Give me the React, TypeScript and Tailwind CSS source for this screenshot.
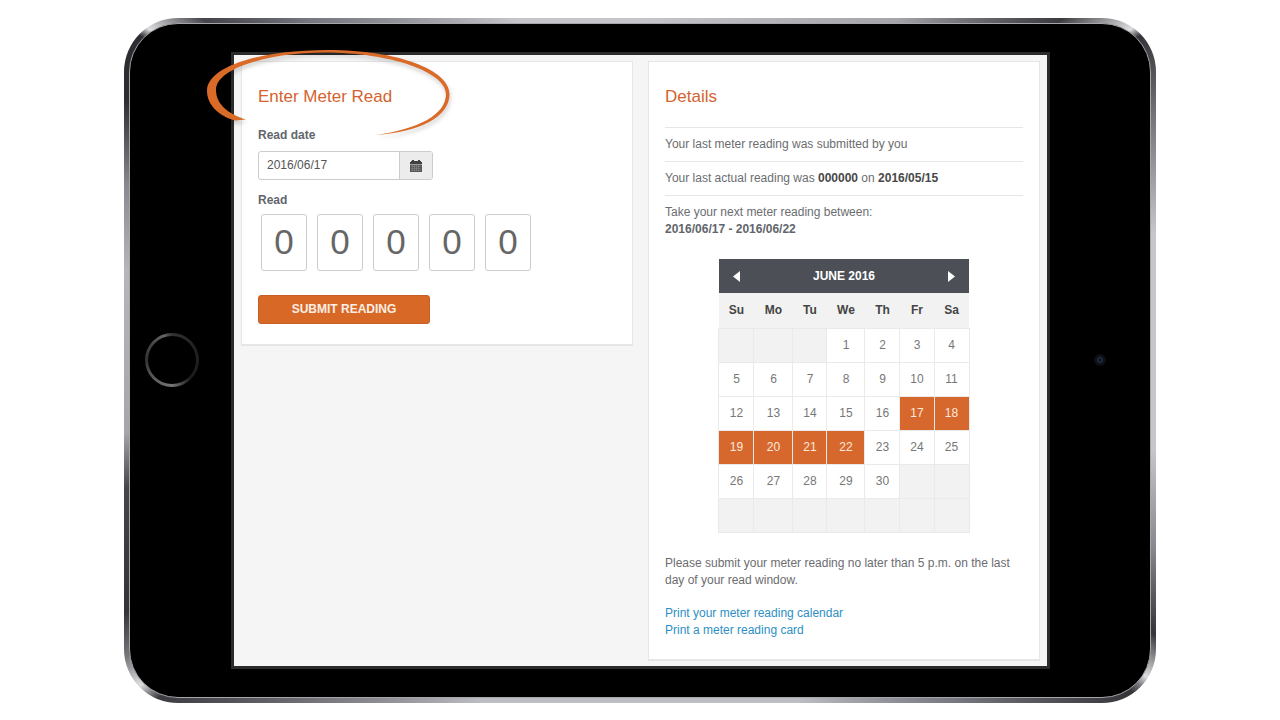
import type { ReactNode } from 'react';

const weekDays = ['Su', 'Mo', 'Tu', 'We', 'Th', 'Fr', 'Sa'];
const columnWidths = ['w-[35px]', 'w-[39px]', 'w-[34px]', 'w-[38px]', 'w-[35px]', 'w-[34px]', 'w-[35px]'];

const FIRST_WEEKDAY = 3;
const DAYS_IN_MONTH = 30;
const WINDOW_START = 17;
const WINDOW_END = 22;

const weeks = Array.from({ length: 6 }, (_, week) =>
  weekDays.map((_, weekday) => {
    const day = week * 7 + weekday - FIRST_WEEKDAY + 1;
    return day >= 1 && day <= DAYS_IN_MONTH ? day : null;
  }),
);

const dayClass = (day: number | null) => {
  if (day === null) return 'bg-[#f2f2f2]';
  if (day >= WINDOW_START && day <= WINDOW_END) return 'bg-[#d7682d] text-[#fbe9df]';
  return 'bg-white';
};

const CalendarIcon = () => (
  <svg width="12" height="12" viewBox="0 0 12 12" aria-hidden="true">
    <path d="M1 1h1V0h2v1h4V0h2v1h1v1h1v2H0V2h1z" fill="#404040" />
    <path d="M0 4.500h12V12H0z" fill="#555" />
    <path
      d="M1 6.500h10M1 8.500h10M1 10.500h10M2.500 5v6M4.500 5v6M6.500 5v6M8.500 5v6"
      stroke="#999"
      strokeWidth=".4"
    />
  </svg>
);

const Card = ({ title, children }: { title: string; children: ReactNode }) => (
  <section className="min-w-0 flex-1 border border-[#e6e6e6] border-b-2 bg-white px-4 pt-[23px]">
    <h2 className="text-[17px] leading-6 text-[#d4622f]">{title}</h2>
    {children}
  </section>
);

const MeterForm = () => (
  <form className="flex flex-col items-start pt-[14px] pb-5" onSubmit={(e) => e.preventDefault()}>
    <label htmlFor="read-date" className="leading-6 font-bold text-[#62666c]">
      Read date
    </label>
    <div className="mt-1 flex h-[29px] w-[175px] overflow-hidden rounded-[3px] border border-[#ccc]">
      <input
        id="read-date"
        defaultValue="2016/06/17"
        className="min-w-0 flex-1 px-2 text-[#555] outline-none"
      />
      <button
        type="button"
        aria-label="Open calendar"
        className="flex w-[33px] items-center justify-center border-l border-[#ccc] bg-[#ececec]"
      >
        <CalendarIcon />
      </button>
    </div>
    <fieldset className="mt-2">
      <legend className="leading-6 font-bold text-[#62666c]">Read</legend>
      <div className="mt-[2px] flex gap-[10px] px-[3px]">
        {[1, 2, 3, 4, 5].map((digit) => (
          <input
            key={digit}
            aria-label={`Digit ${digit}`}
            defaultValue="0"
            maxLength={1}
            className="h-[57px] w-[46px] rounded-[3px] border border-[#ccc] pb-[2px] text-center text-[35px] text-[#666] outline-none"
          />
        ))}
      </div>
    </fieldset>
    <button
      type="submit"
      className="mt-6 h-[29px] w-[172px] rounded-[3px] border border-[#c45f26] bg-[#d86826] font-bold text-[#fdeee5]"
    >
      SUBMIT READING
    </button>
  </form>
);

const Calendar = () => (
  <table className="mx-auto mt-[21px] w-[251px] table-fixed border-collapse text-center text-[#777]">
    <colgroup>
      {columnWidths.map((width, i) => (
        <col key={i} className={width} />
      ))}
    </colgroup>
    <thead>
      <tr className="h-[34px] bg-[#4c4f56] text-white">
        <th>
          <button type="button" aria-label="Previous month" className="block w-full">
            <svg className="mx-auto" width="7" height="11" viewBox="0 0 7 11">
              <path d="M7 0v11L0 5.5z" fill="#fff" />
            </svg>
          </button>
        </th>
        <th colSpan={5}>JUNE 2016</th>
        <th>
          <button type="button" aria-label="Next month" className="block w-full">
            <svg className="mx-auto" width="7" height="11" viewBox="0 0 7 11">
              <path d="M0 0v11l7-5.5z" fill="#fff" />
            </svg>
          </button>
        </th>
      </tr>
      <tr className="h-[35px] bg-[#f2f2f2] text-[#444]">
        {weekDays.map((name) => (
          <th key={name}>{name}</th>
        ))}
      </tr>
    </thead>
    <tbody>
      {weeks.map((week, i) => (
        <tr key={i} className="h-[34px]">
          {week.map((day, j) => (
            <td key={j} className={`border border-[#eaeaea] ${dayClass(day)}`}>
              {day}
            </td>
          ))}
        </tr>
      ))}
    </tbody>
  </table>
);

const Details = () => (
  <div className="pt-[18px] pb-5">
    <p className="border-t border-[#e6e6e6] py-2">Your last meter reading was submitted by you</p>
    <p className="border-t border-[#e6e6e6] py-2">
      Your last actual reading was <b className="text-[#484848]">000000</b> on{' '}
      <b className="text-[#484848]">2016/05/15</b>
    </p>
    <p className="border-t border-[#e6e6e6] pt-2">
      Take your next meter reading between:
      <br />
      <b className="text-[#62666c]">2016/06/17 - 2016/06/22</b>
    </p>
    <Calendar />
    <p className="mt-[22px]">
      Please submit your meter reading no later than 5 p.m. on the last day of your read window.
    </p>
    <div className="mt-4 flex flex-col items-start text-[#2d8fc4]">
      <a href="#calendar">Print your meter reading calendar</a>
      <a href="#card">Print a meter reading card</a>
    </div>
  </div>
);

const Highlight = () => (
  <svg
    className="pointer-events-none absolute -top-[7px] -left-[29px] drop-shadow-[1px_3px_2px_rgba(0,0,0,0.2)]"
    width="248"
    height="90"
    viewBox="205 48 248 90"
    aria-hidden="true"
  >
    <path
      d="M246 119.5L235 120.5C218 116 207 104 207 91C207 66 262 50 328 50C398 50 449.5 70 449.5 94C449.5 117 420 132 376 135C418 129 446 115 446 94C446 72 390 52.5 325 52.5C270 52.5 216 68 216 90C216 104 228 114 246 119.5Z"
      fill="#d96a28"
    />
  </svg>
);

const HomeButton = () => (
  <button
    type="button"
    aria-label="Home"
    className="size-[54px] rounded-full bg-[conic-gradient(#333,#222_15%,#1c1c1c_38%,#777_50%,#555_65%,#333_75%,#444_85%,#666_95%,#333)] p-[3px]"
  >
    <span className="block size-full rounded-full bg-black" />
  </button>
);

const Camera = () => (
  <span className="flex size-3 items-center justify-center rounded-full bg-[#0d0f12]">
    <span className="size-[6px] rounded-full border border-[#263a55] bg-[#0e1622]" />
  </span>
);

const App = () => (
  <div className="min-h-screen bg-white px-[124px] py-[18px] font-['Liberation_Sans',Arial,sans-serif] text-[12px] leading-[17px] text-[#6b6d70]">
    <div className="rounded-[54px] bg-[conic-gradient(#c5c5ca_0deg,#a5a5aa_37deg,#3c3c40_51deg,#dedee0_56deg,#333338_57deg,#77777c_65deg,#c5c5ca_76deg,#c5c5ca_100deg,#88888e_110deg,#35353a_118deg,#dedee0_122deg,#77777c_123deg,#333338_124deg,#77777f_137deg,#bdbdc4_155deg,#bdbdc4_205deg,#77777c_223deg,#3a3a40_235deg,#dedee0_237deg,#77777c_240deg,#333338_244deg,#45454a_256deg,#a5a5aa_262deg,#b5b5ba_280deg,#88888e_289deg,#2d2d31_297deg,#2d2d31_303deg,#dedee0_304deg,#44444a_308deg,#77777f_316deg,#c5c5ca_340deg,#c5c5ca_360deg)] p-[5px]">
      <div className="flex items-center rounded-[49px] border border-[#a5a5aa] bg-black py-7">
        <div className="flex w-[101px] shrink-0 justify-center pr-[17px]">
          <HomeButton />
        </div>
        <div className="relative flex min-w-0 flex-1 items-start gap-[15px] border-[3px] border-[#2b2b2b] bg-[#f5f5f5] px-[7px] pt-[6px] pb-[5px]">
          <Card title="Enter Meter Read">
            <MeterForm />
          </Card>
          <Card title="Details">
            <Details />
          </Card>
          <Highlight />
        </div>
        <div className="flex w-[100px] shrink-0 justify-center">
          <Camera />
        </div>
      </div>
    </div>
  </div>
);

export default App;
